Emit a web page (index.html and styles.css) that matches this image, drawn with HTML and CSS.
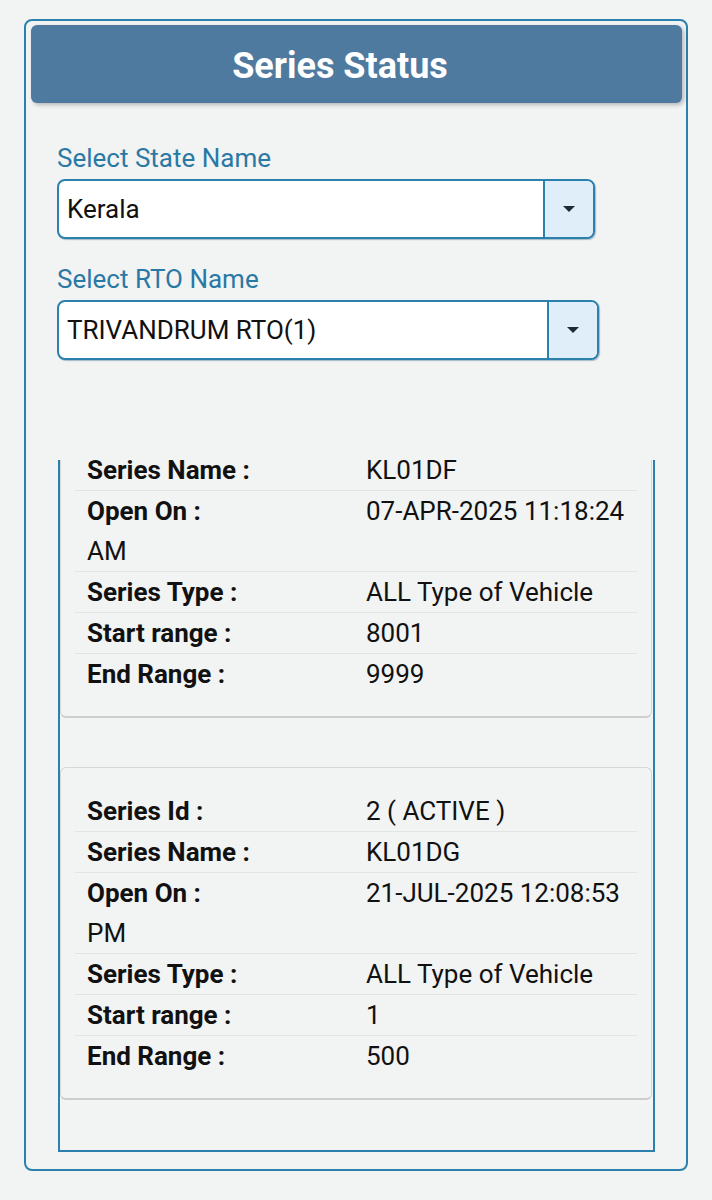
FILE: index.html
```html
<!DOCTYPE html>
<html lang="en">
<head>
  <meta charset="UTF-8">
  <meta name="viewport" content="width=device-width, initial-scale=1.0">
  <title>Series Status</title>
  <link rel="stylesheet" href="styles.css">
</head>
<body>
  <div class="panel">
    <div class="panel-header">
      <h1>Series Status</h1>
    </div>

    <div class="filters">
      <label class="field-label">Select State Name</label>
      <div class="select state-select">
        <span class="select-text">Kerala</span>
        <div class="select-btn">
          <svg width="14" height="8" viewBox="0 0 14 8"><path d="M1 1h12L7 7z" fill="#1c2b3a"/></svg>
        </div>
      </div>

      <label class="field-label">Select RTO Name</label>
      <div class="select rto-select">
        <span class="select-text">TRIVANDRUM RTO(1)</span>
        <div class="select-btn">
          <svg width="14" height="8" viewBox="0 0 14 8"><path d="M1 1h12L7 7z" fill="#1c2b3a"/></svg>
        </div>
      </div>
    </div>

    <!-- Series list (scrolled) -->
    <div class="series-list">
      <div class="series-inner">
        <div class="series-card">
          <div class="row"><span class="key">Series Id :</span><span class="val">1 ( CLOSED )</span></div>
          <div class="row"><span class="key">Series Name :</span><span class="val">KL01DF</span></div>
          <div class="row"><span class="key">Open On :</span>07-APR-2025 11:18:24 AM</div>
          <div class="row"><span class="key">Series Type :</span><span class="val">ALL Type of Vehicle</span></div>
          <div class="row"><span class="key">Start range :</span><span class="val">8001</span></div>
          <div class="row"><span class="key">End Range :</span><span class="val">9999</span></div>
        </div>

        <div class="series-card">
          <div class="row"><span class="key">Series Id :</span><span class="val">2 ( ACTIVE )</span></div>
          <div class="row"><span class="key">Series Name :</span><span class="val">KL01DG</span></div>
          <div class="row"><span class="key">Open On :</span>21-JUL-2025 12:08:53 PM</div>
          <div class="row"><span class="key">Series Type :</span><span class="val">ALL Type of Vehicle</span></div>
          <div class="row"><span class="key">Start range :</span><span class="val">1</span></div>
          <div class="row"><span class="key">End Range :</span><span class="val">500</span></div>
        </div>
      </div>
    </div>
  </div>
</body>
</html>
```

FILE: styles.css
```css
body {
  font-family: Roboto, "Noto Sans", Arial, sans-serif;
  margin: 0;
  padding: 0;
  background-color: #f2f3f3;
  color: #111;
}

.panel {
  box-sizing: border-box;
  width: 664px;
  height: 1152px;
  margin: 19px 0 0 24px;
  padding: 4px 4px 0 5px;
  border: 2px solid #2c80ad;
  border-radius: 8px;
}

.panel-header {
  height: 78px;
  background-color: #4f7aa0;
  border-radius: 6px;
  box-shadow: 2px 2px 4px rgba(0, 0, 0, 0.25);
  padding-right: 33px;
}

.panel-header h1 {
  margin: 0;
  color: #fff;
  font-size: 36px;
  font-weight: 700;
  line-height: 82px;
  text-align: center;
}

.filters {
  padding: 42px 0 0 26px;
}

.field-label {
  display: block;
  color: #2a79a4;
  font-size: 26px;
  line-height: 26px;
  margin-bottom: 8px;
}

.select {
  box-sizing: border-box;
  display: flex;
  height: 60px;
  border: 2px solid #2c80ad;
  border-radius: 8px;
  background-color: #fff;
  overflow: hidden;
  box-shadow: 1px 1px 1px rgba(20, 80, 120, 0.35);
}

.state-select {
  width: 538px;
  margin-bottom: 27px;
}

.rto-select {
  width: 542px;
}

.select-text {
  flex: 1;
  padding-left: 8px;
  font-size: 26px;
  line-height: 56px;
  color: #111;
}

.select-btn {
  width: 48px;
  border-left: 2px solid #2c80ad;
  background-color: #e0eefa;
  display: flex;
  align-items: center;
  justify-content: center;
}

.series-list {
  box-sizing: border-box;
  width: 597px;
  height: 692px;
  margin: 100px 0 0 27px;
  border: 2px solid #2c80ad;
  border-top: none;
  overflow: hidden;
}

.series-inner {
  margin-top: -75px;
}

.series-card {
  box-sizing: border-box;
  width: 592px;
  margin-bottom: 49px;
  padding: 23px 14px 22px 14px;
  border: 1px solid #d6d6d6;
  border-bottom: 2px solid #cdcdcd;
  border-radius: 6px;
  background-color: #f2f3f3;
}

.row {
  padding: 0 0 0 12px;
  font-size: 26px;
  line-height: 40px;
  border-bottom: 1px solid #e3e4e4;
}

.row:last-child {
  border-bottom: none;
}

.key {
  display: inline-block;
  width: 279px;
  font-weight: 700;
}
```
